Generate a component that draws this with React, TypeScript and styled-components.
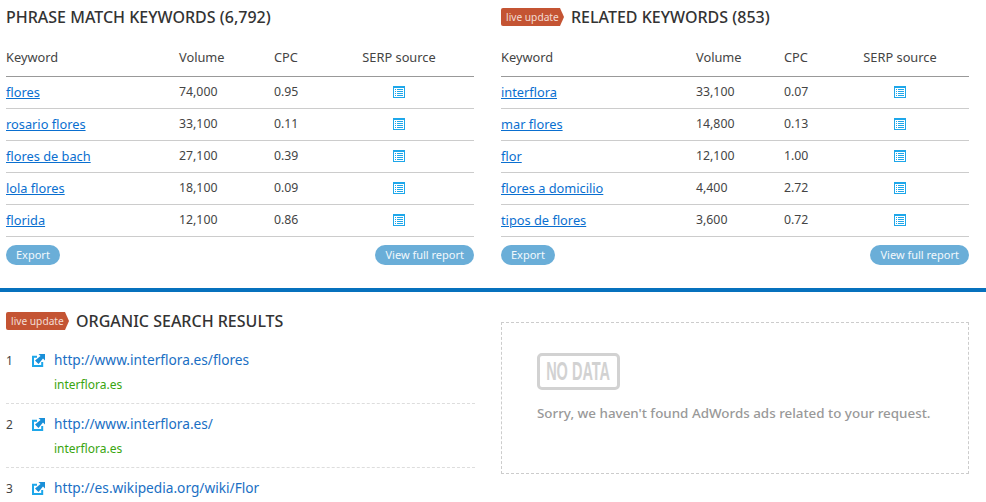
import React from "react";
import styled, { createGlobalStyle } from "styled-components";

const Global = createGlobalStyle`
  html, body { margin: 0; padding: 0; background: #fff; overflow: hidden; }
  body { font-family: "Noto Sans", "Open Sans", sans-serif; color: #333; }
`;
const Page = styled.div`width: 986px; height: 502px; overflow: hidden;`;
const TopRow = styled.div`
  display: grid; grid-template-columns: 468px 468px; column-gap: 27px;
  padding: 0 0 0 6px; height: 288px; border-bottom: 4px solid #0771bd; box-sizing: content-box;
`;
const BottomRow = styled.div`
  display: grid; grid-template-columns: 469px 468px; column-gap: 26px; padding: 0 0 0 6px;
`;
const Column = styled.section`display: flex; flex-direction: column;`;
const TitleRow = styled.div<{ $top: number }>`
  display: flex; align-items: center; gap: 7px; height: 18px; margin-top: ${p => p.$top}px;
`;
const Title = styled.h2`
  margin: 0; font-size: 16px; font-weight: 500; line-height: 18px; color: #333; white-space: nowrap;
`;
const LiveTag = styled.span`
  display: inline-block; width: 63px; height: 18px; line-height: 18px; padding-left: 5px; box-sizing: border-box;
  background: #c45433; color: #f3ddd5; font-size: 10.2px; white-space: nowrap; border-radius: 2px 0 0 2px;
  clip-path: polygon(0 0, 59px 0, 63px 9px, 59px 18px, 0 18px);
`;
const Row = styled.div<{ $cols: string; $head?: boolean }>`
  display: grid; grid-template-columns: ${p => p.$cols}; align-items: center;
  font-size: ${p => (p.$head ? 12.8 : 12.3)}px;
  padding: ${p => (p.$head ? "2px 0 0" : "0 0 2px")}; box-sizing: content-box;
  color: #444; margin-top: ${p => (p.$head ? 10 : 0)}px;
  height: ${p => (p.$head ? 38 : 29)}px;
  border-bottom: 1px solid ${p => (p.$head ? "#999" : "#ccc")};
`;
const KeywordLink = styled.a`color: #0a6fd0; text-decoration: underline; font-size: 12.8px;`;
const Centered = styled.span`display: flex; justify-content: center;`;
const Footer = styled.div`display: flex; justify-content: space-between; margin-top: 8px;`;
const Pill = styled.button`
  height: 20px; border: 0; border-radius: 10px; background: #6aaed8; color: #f2f8fc;
  font: 400 11px "Noto Sans", sans-serif; padding: 0 10px 2px; white-space: nowrap;
`;
const Result = styled.div<{ $first?: boolean }>`
  display: grid; grid-template-columns: 26px 22px 1fr; height: ${p => (p.$first ? 54 : 64)}px; align-content: start;
  padding-top: ${p => (p.$first ? 0 : 10)}px; box-sizing: border-box;
  margin-top: ${p => (p.$first ? 20 : 0)}px;
  border-bottom: 1px dashed #ddd;
`;
const Rank = styled.span`font-size: 12px; line-height: 20px; padding-top: 1px; color: #444;`;
const IconCell = styled.span`display: flex; align-items: center; height: 20px; padding-top: 1px; box-sizing: border-box;`;
const Url = styled.a`font-size: 13.7px; line-height: 20px; color: #1a6fc4; text-decoration: none;`;
const Domain = styled.div`grid-column: 3; margin-top: 6px; font-size: 12px; line-height: 16px; color: #3aa50f;`;
const NoDataBox = styled.div`
  margin-top: 30px; height: 152px; border: 1px dashed #ccc; box-sizing: border-box;
  padding: 30px 35px; display: flex; flex-direction: column; align-items: flex-start;
`;
const NoDataBadge = styled.div`
  width: 83px; height: 37px; border: 3px solid #d2d2d2; border-radius: 5px; box-sizing: border-box;
  display: flex; align-items: center; justify-content: center; overflow: hidden;
`;
const NoDataLabel = styled.span`
  display: inline-block; transform: scaleX(0.58); font: 700 25px "Liberation Sans", sans-serif;
  color: #d2d2d2; white-space: nowrap;
`;
const NoDataText = styled.p`
  margin: 13px 0 0; font-size: 13.4px; font-weight: 500; line-height: 20px; color: #999; white-space: nowrap;
`;

const ListIcon = () => (
  <svg width="12" height="12" viewBox="0 0 12 12" aria-hidden="true">
    <rect x="0.5" y="0.5" width="11" height="11" fill="#fff" stroke="#1ea7ea" />
    <rect x="0" y="0" width="12" height="2" fill="#1ea7ea" />
    <path d="M2 3.5h1M4 3.5h6M2 5.5h1M4 5.5h6M2 7.5h1M4 7.5h6M2 9.5h1M4 9.5h6" stroke="#1ea7ea" strokeWidth="1" />
  </svg>
);
const OutIcon = () => (
  <svg width="13" height="13" viewBox="0 0 13 13" aria-hidden="true">
    <path d="M5 2.8H1v9.2h9.2V8" fill="none" stroke="#1ea7ea" strokeWidth="2" />
    <path d="M6.5 0H13v6.5l-2-2L6.5 10 3 6.5l5.5-4.5z" fill="#1a8fd8" />
  </svg>
);

type Kw = [string, string, string];
const phrase: Kw[] = [["flores","74,000","0.95"],["rosario flores","33,100","0.11"],["flores de bach","27,100","0.39"],["lola flores","18,100","0.09"],["florida","12,100","0.86"]];
const related: Kw[] = [["interflora","33,100","0.07"],["mar flores","14,800","0.13"],["flor","12,100","1.00"],["flores a domicilio","4,400","2.72"],["tipos de flores","3,600","0.72"]];

const KeywordTable = ({ cols, rows }: { cols: string; rows: Kw[] }) => (
  <>
    <Row $head $cols={cols}><span>Keyword</span><span>Volume</span><span>CPC</span><Centered>SERP source</Centered></Row>
    {rows.map(r => (
      <Row key={r[0]} $cols={cols}>
        <KeywordLink href="#">{r[0]}</KeywordLink><span>{r[1]}</span><span>{r[2]}</span>
        <Centered><ListIcon /></Centered>
      </Row>
    ))}
    <Footer><Pill>Export</Pill><Pill>View full report</Pill></Footer>
  </>
);

const results: [string, string?][] = [["http://www.interflora.es/flores","interflora.es"],["http://www.interflora.es/","interflora.es"],["http://es.wikipedia.org/wiki/Flor"]];

export default function App() {
  return (
    <Page>
      <Global />
      <TopRow>
        <Column>
          <TitleRow $top={8}><Title>PHRASE MATCH KEYWORDS (6,792)</Title></TitleRow>
          <KeywordTable cols="173px 95px 50px 150px" rows={phrase} />
        </Column>
        <Column>
          <TitleRow $top={8}><LiveTag>live update</LiveTag><Title>RELATED KEYWORDS (853)</Title></TitleRow>
          <KeywordTable cols="195px 88px 47px 138px" rows={related} />
        </Column>
      </TopRow>
      <BottomRow>
        <Column>
          <TitleRow $top={20}><LiveTag>live update</LiveTag><Title>ORGANIC SEARCH RESULTS</Title></TitleRow>
          {results.map((r, i) => (
            <Result key={r[0]} $first={i === 0}>
              <Rank>{i + 1}</Rank>
              <IconCell><OutIcon /></IconCell>
              <Url href="#">{r[0]}</Url>
              {r[1] && <Domain>{r[1]}</Domain>}
            </Result>
          ))}
        </Column>
        <Column>
          <NoDataBox>
            <NoDataBadge><NoDataLabel>NO DATA</NoDataLabel></NoDataBadge>
            <NoDataText>Sorry, we haven't found AdWords ads related to your request.</NoDataText>
          </NoDataBox>
        </Column>
      </BottomRow>
    </Page>
  );
}
